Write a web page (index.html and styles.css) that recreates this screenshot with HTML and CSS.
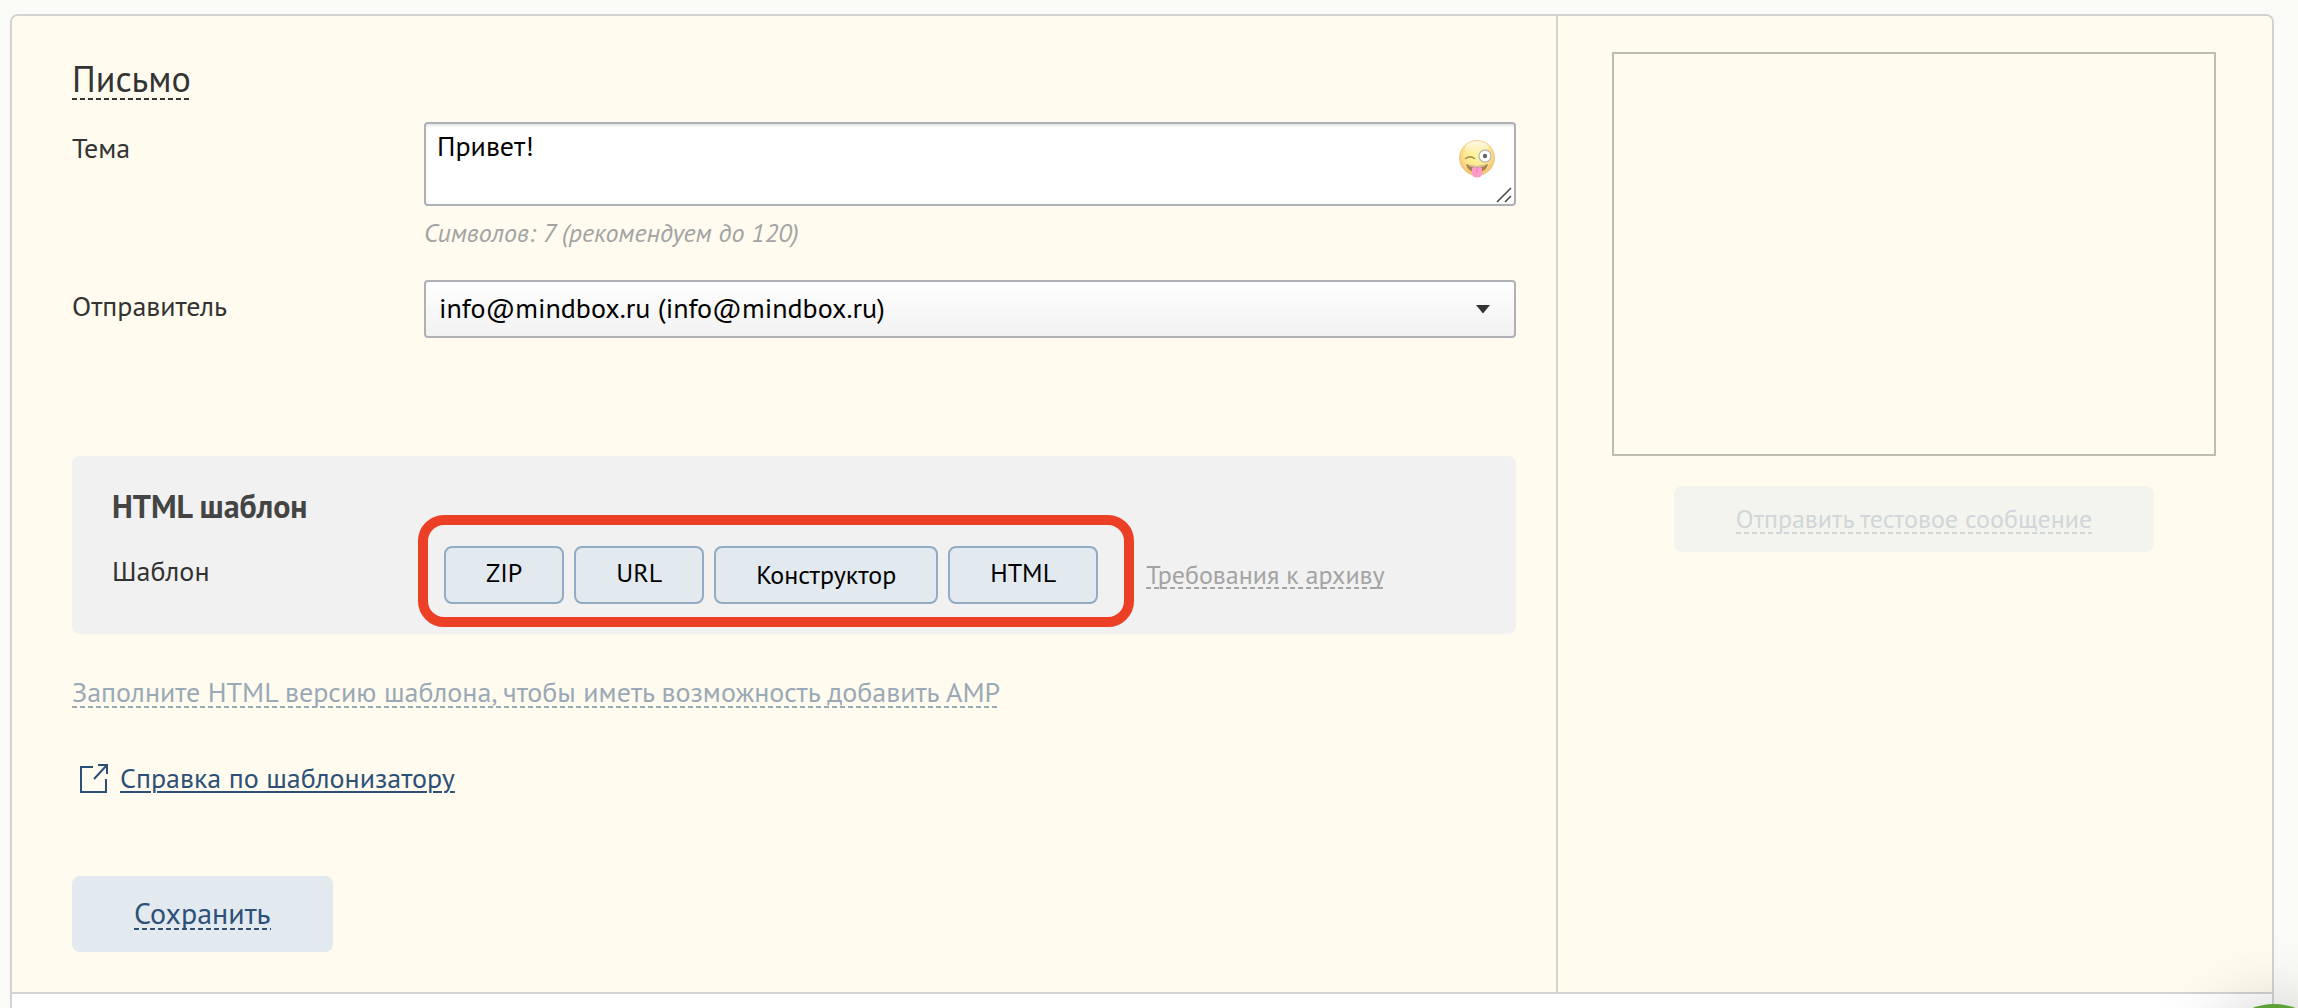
FILE: index.html
```html
<!DOCTYPE html>
<html lang="ru">
<head>
<meta charset="utf-8">
<meta name="viewport" content="width=device-width, initial-scale=1">
<title>Письмо</title>
<link rel="stylesheet" href="styles.css">
</head>
<body>
<main class="panel">
  <div class="editor">
    <form class="form">
      <h1 class="title"><span class="dashed">Письмо</span></h1>

      <div class="row row-subject">
        <label class="label" for="subject">Тема</label>
        <div class="field">
          <div class="subject">
            <textarea class="textarea" id="subject">Привет!</textarea>
            <button class="emoji" type="button" aria-label="Эмодзи">
              <svg width="36" height="38" viewBox="0 0 36 38">
                <defs>
                  <radialGradient id="face" cx="50%" cy="40%" r="62%">
                    <stop offset="0" stop-color="#fff8a0"/>
                    <stop offset="0.6" stop-color="#fde68e"/>
                    <stop offset="1" stop-color="#f3b56c"/>
                  </radialGradient>
                  <linearGradient id="shine" x1="0" y1="0" x2="0" y2="1">
                    <stop offset="0" stop-color="#fff" stop-opacity="0.8"/>
                    <stop offset="1" stop-color="#fff" stop-opacity="0"/>
                  </linearGradient>
                </defs>
                <circle cx="18" cy="18" r="17.5" fill="url(#face)" stroke="#f0c080" stroke-width="0.8"/>
                <ellipse cx="18" cy="8" rx="12" ry="7" fill="url(#shine)"/>
                <path d="M6.500 18.500q4.500-3.500 9 0" fill="none" stroke="#a08a50" stroke-width="1.500" stroke-linecap="round"/>
                <circle cx="26" cy="16" r="6" fill="#fff" stroke="#bdbbb2" stroke-width="1.300"/>
                <circle cx="26" cy="16" r="2.200" fill="#666"/>
                <path d="M7 24q11 4 22 0q-2 8.500-11 8.500T7 24z" fill="#a08050"/>
                <path d="M9.500 25.300q8.500 2.400 17 0l-1 1q-7.500 1.600-15 0z" fill="#fffdf0"/>
                <path d="M13 28q2.500-1.800 5-.5q2.500-1.300 5 .5v5q0 4.500-5 4.500t-5-4.500z" fill="#fb9cc8"/>
                <path d="M18 28v5" stroke="#ee7fb2" stroke-width="1"/>
              </svg>
            </button>
            <svg class="grip" width="16" height="16" viewBox="0 0 16 16" aria-hidden="true">
              <path d="M1 15L15 1M9 15l6-6" fill="none" stroke="#444" stroke-width="1.500"/>
            </svg>
          </div>
          <p class="hint">Символов: 7 (рекомендуем до 120)</p>
        </div>
      </div>

      <div class="row row-sender">
        <label class="label" for="sender">Отправитель</label>
        <div class="field select-box">
          <select class="select" id="sender">
            <option>info@mindbox.ru (info@mindbox.ru)</option>
          </select>
          <svg class="caret" width="14" height="9" viewBox="0 0 14 9" aria-hidden="true"><path d="M0 0h14L7 8.500z" fill="#333"/></svg>
        </div>
      </div>

      <section class="template">
        <h2 class="subtitle">HTML шаблон</h2>
        <div class="template-row">
          <span class="label">Шаблон</span>
          <div class="choices">
            <button class="choice upload" type="button">ZIP</button>
            <button class="choice upload" type="button">URL</button>
            <button class="choice" type="button">Конструктор</button>
            <button class="choice upload" type="button">HTML</button>
          </div>
          <a class="archive dashed" href="#archive">Требования к архиву</a>
        </div>
      </section>

      <p class="amp"><a class="amp-link dashed" href="#amp">Заполните HTML версию шаблона, чтобы иметь возможность добавить AMP</a></p>

      <p class="help">
        <svg width="28" height="29" viewBox="0 0 28 29" fill="none" stroke="#2c5078" stroke-width="2" aria-hidden="true">
          <path d="M13 3H1v25h25V15"/>
          <path d="M14 15L26.500 1.500M18 1h9v9"/>
        </svg>
        <a class="help-link" href="#help">Справка по шаблонизатору</a>
      </p>

      <button class="save" type="button"><span class="dashed">Сохранить</span></button>
    </form>

    <aside class="aside">
      <div class="preview"></div>
      <button class="send-test" type="button" disabled><span class="dashed">Отправить тестовое сообщение</span></button>
    </aside>
  </div>
</main>
<button class="chat" type="button" aria-label="Чат"></button>
</body>
</html>
```
FILE: styles.css
```css
* { box-sizing: border-box; }

body {
  margin: 0;
  min-height: 100vh;
  display: flex;
  flex-direction: column;
  padding: 14px 24px 0 10px;
  background: #fafbf7;
  color: #333;
  font: 28px/36px "PT Sans", "Noto Sans", sans-serif;
}

h1, h2, p { margin: 0; }
button, select, textarea { font: inherit; margin: 0; }

.panel {
  flex: 1;
  background: #fff;
  border: 2px solid #d2d2d2;
  border-bottom: 0;
  border-radius: 8px 8px 0 0;
  overflow: hidden;
}

.editor {
  display: grid;
  grid-template-columns: minmax(0, 1fr) 716px;
  background: #fffbee;
  border-bottom: 2px solid #d2d2d2;
}

.form { padding: 42px 40px 40px 60px; }

.dashed {
  display: inline-block;
  text-decoration: none;
  background: repeating-linear-gradient(90deg, currentColor 0 5px, transparent 5px 8px) left bottom / 100% 2px no-repeat;
}

.title {
  height: 64px;
  font-size: 36px;
  font-weight: 400;
  line-height: 42px;
}

.row { display: grid; grid-template-columns: 352px minmax(0, 1fr); }
.row .label { padding-top: 8px; }
.row-subject { height: 158px; }

.field { position: relative; }
.subject { position: relative; height: 84px; }

.textarea {
  display: block;
  width: 100%;
  height: 84px;
  padding: 4px 60px 4px 11px;
  border: 2px solid #afb0b5;
  border-radius: 4px;
  background: #fff;
  box-shadow: inset 0 2px 2px #e8e8e8;
  color: #000;
  resize: none;
}

.emoji {
  position: absolute;
  top: 18px;
  right: 21px;
  padding: 0;
  border: 0;
  background: none;
  line-height: 0;
}
.grip { position: absolute; right: 4px; bottom: 3px; pointer-events: none; }

.hint { padding-top: 9px; color: #a3a3a3; font-style: italic; font-size: 26px; }

.select {
  display: block;
  width: 100%;
  height: 58px;
  padding: 0 60px 2px 13px;
  appearance: none;
  border: 2px solid #afb0b5;
  border-radius: 4px;
  background: linear-gradient(#fefefe, #f2f2f3);
  color: #000;
}
.caret { position: absolute; right: 26px; top: 25px; pointer-events: none; }

.template {
  margin-top: 118px;
  height: 178px;
  padding: 30px 40px 0;
  border-radius: 8px;
  background: #f1f1f1;
}
.subtitle { height: 29px; font-size: 32px; line-height: 40px; color: #444; }

.template-row { display: flex; align-items: flex-start; }
.template-row .label { width: 306px; padding-top: 38px; }

.choices {
  display: flex;
  gap: 10px;
  height: 112px;
  padding: 21px 26px 0 16px;
  border: 10px solid #eb4025;
  border-radius: 26px;
}
.choice {
  height: 58px;
  padding: 0 40px;
  border: 2px solid #92acc3;
  border-radius: 8px;
  background: #e2e9ef;
  color: #000;
  font-size: 26px;
}
.upload { padding-bottom: 4px; }

.archive { margin: 46px 0 0 12px; color: #a3a3a3; font-size: 26px; line-height: 28px; }

.amp { padding-top: 40px; }
.amp-link { line-height: 32px; color: #9aa9b7; }

.help { display: flex; align-items: center; gap: 12px; padding: 50px 0 0 8px; }
.help-link { color: #2c5078; text-underline-offset: 3px; text-decoration-thickness: 2px; }

.save {
  display: block;
  margin-top: 80px;
  height: 76px;
  padding: 0 62px 2px;
  border: 0;
  border-radius: 8px;
  background: #e2e9ef;
  color: #2c5078;
  font-size: 30px;
  line-height: 34px;
}

.aside {
  display: flex;
  flex-direction: column;
  align-items: center;
  padding: 36px 56px 0 54px;
  border-left: 2px solid #d2d2d2;
}
.preview { width: 100%; height: 404px; border: 2px solid #bfbcb0; }
.send-test {
  height: 66px;
  margin-top: 30px;
  padding: 0 62px;
  border: 0;
  border-radius: 8px;
  background: #f3f4ee;
  color: #d0d6d9;
  font-size: 26px;
  line-height: 30px;
}

.chat {
  position: fixed;
  right: -36px;
  bottom: -116px;
  width: 120px;
  height: 120px;
  border: 0;
  border-radius: 50%;
  background: #5ca135;
  box-shadow: 0 0 70px rgba(0, 0, 0, 0.2);
}
```
